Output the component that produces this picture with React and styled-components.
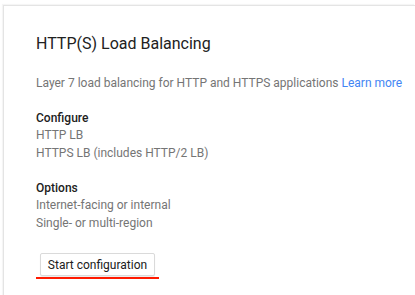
import React from "react";
import styled, { createGlobalStyle } from "styled-components";

const GlobalStyle = createGlobalStyle`
  body {
    margin: 0;
    padding: 0;
    background: #fff;
    font-family: Roboto, "Liberation Sans", Arial, sans-serif;
  }
`;

const Page = styled.div`
  padding: 5px 0 0 3px;
  height: 295px;
  box-sizing: border-box;
  overflow: hidden;
`;

const Card = styled.div`
  border-top: 1px solid #e4e4e4;
  border-left: 1px solid #e4e4e4;
  box-shadow: -1px -1px 1px rgba(0, 0, 0, 0.04);
  padding: 26px 0 30px 32px;
  height: 400px;
  box-sizing: border-box;
`;

const Title = styled.h2`
  margin: 0;
  font-size: 16px;
  font-weight: 400;
  line-height: 24px;
  color: #212121;
`;

const Desc = styled.p`
  margin: 18px 0 0;
  font-size: 12px;
  line-height: 18px;
  color: #757575;
`;

const Link = styled.a`
  color: #4285f4;
  text-decoration: none;
`;

const Section = styled.div`
  margin-top: 18px;
`;

const Heading = styled.div`
  font-size: 12px;
  font-weight: 500;
  line-height: 17px;
  color: #212121;
`;

const Item = styled.div`
  font-size: 12px;
  line-height: 17.5px;
  color: #757575;
`;

const ButtonWrap = styled.div`
  margin-top: 21px;
  display: inline-flex;
  flex-direction: column;
  align-items: center;
`;

const Button = styled.button`
  height: 23px;
  padding: 0 7px;
  border: 1px solid #dadada;
  border-radius: 2px;
  background: #fff;
  box-shadow: 0 1px 1px rgba(0, 0, 0, 0.08);
  font-family: inherit;
  font-size: 12px;
  color: #202020;
`;

const Underline = styled.div`
  width: 123px;
  height: 2px;
  margin-top: 1px;
  background: #ff1a00;
`;

export default function App() {
  return (
    <>
      <GlobalStyle />
      <Page>
        <Card>
          <Title>HTTP(S) Load Balancing</Title>
          <Desc>
            Layer 7 load balancing for HTTP and HTTPS applications{" "}
            <Link href="#">Learn more</Link>
          </Desc>
          <Section>
            <Heading>Configure</Heading>
            <Item>HTTP LB</Item>
            <Item>HTTPS LB (includes HTTP/2 LB)</Item>
          </Section>
          <Section>
            <Heading>Options</Heading>
            <Item>Internet-facing or internal</Item>
            <Item>Single- or multi-region</Item>
          </Section>
          <ButtonWrap>
            <Button>Start configuration</Button>
            <Underline />
          </ButtonWrap>
        </Card>
      </Page>
    </>
  );
}
